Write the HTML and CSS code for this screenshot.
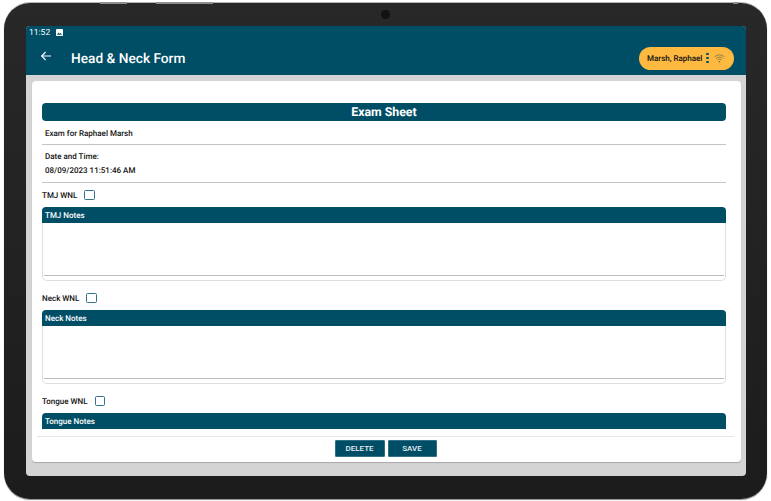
FILE: index.html
```html
<!DOCTYPE html>
<html lang="en">
<head>
<meta charset="utf-8">
<title>Head &amp; Neck Form</title>
<link rel="stylesheet" href="styles.css">
</head>
<body>
<div class="device">
  <span class="hw-btn hw-btn-a"></span>
  <span class="hw-btn hw-btn-b"></span>
  <span class="hw-btn hw-btn-c"></span>
  <span class="camera"></span>
  <div class="screen">
    <header class="appbar">
      <div class="status">
        <span>11:52</span>
        <svg class="status-icon" viewBox="0 0 8 8"><rect width="8" height="8" rx="0.8" fill="#fff"/><path d="M1 6.6 3 4l1.4 1.6L5.3 4.6 7 6.6z" fill="#004d66"/></svg>
      </div>
      <div class="toolbar">
        <svg class="back" viewBox="0 0 12 12"><path d="M11 6H1.8M5.6 2 1.6 6l4 4" fill="none" stroke="#fff" stroke-width="1.1"/></svg>
        <h1 class="title">Head &amp; Neck Form</h1>
        <div class="pill">
          <span class="pill-name">Marsh, Raphael</span>
          <span class="dots"><i></i><i></i><i></i></span>
          <svg class="wifi" viewBox="0 0 12 10"><path d="M.6 3.2a7.6 7.6 0 0 1 10.8 0M2.2 5a5.3 5.3 0 0 1 7.6 0M3.8 6.7a3 3 0 0 1 4.4 0" fill="none" stroke="#6b6a45" stroke-width=".8"/><circle cx="6" cy="8.6" r=".9" fill="#6b6a45"/></svg>
        </div>
      </div>
    </header>
    <main class="stage">
      <section class="card">
        <div class="scroll">
          <h2 class="sheet-title">Exam Sheet</h2>
          <p class="info info-exam">Exam for Raphael Marsh</p>
          <hr class="rule">
          <p class="info info-label">Date and Time:</p>
          <p class="info info-date">08/09/2023 11:51:46 AM</p>
          <hr class="rule">
          <label class="wnl"><span>TMJ WNL</span><span class="check"></span></label>
          <div class="notes">
            <div class="notes-head">TMJ Notes</div>
            <div class="notes-body"><div class="notes-line"></div></div>
          </div>
          <label class="wnl"><span>Neck WNL</span><span class="check"></span></label>
          <div class="notes">
            <div class="notes-head">Neck Notes</div>
            <div class="notes-body"><div class="notes-line"></div></div>
          </div>
          <label class="wnl"><span>Tongue WNL</span><span class="check"></span></label>
          <div class="notes">
            <div class="notes-head">Tongue Notes</div>
            <div class="notes-body"><div class="notes-line"></div></div>
          </div>
        </div>
        <footer class="actions">
          <button class="btn btn-delete">DELETE</button>
          <button class="btn btn-save">SAVE</button>
        </footer>
      </section>
    </main>
  </div>
</div>
</body>
</html>
```
FILE: styles.css
```css
* { box-sizing: border-box; }
html, body { margin: 0; height: 100%; background: #fff; overflow: hidden; }
body { font-family: Roboto, sans-serif; padding: 3px 4px 0; text-rendering: geometricPrecision; }
.device {
  position: relative;
  width: 763px;
  height: 496px;
  padding: 23px 21px 23px 22px;
  background: linear-gradient(#282828, #1c1c1c);
  border-radius: 26px;
  box-shadow: 0 1px 1px #8a8a8a, 0 -1px 0 #b5b5b5;
}
.hw-btn { position: absolute; top: -1px; height: 2px; background: #8f8f93; }
.hw-btn-a { left: 96px; width: 27px; }
.hw-btn-b { left: 152px; width: 57px; }
.hw-btn-c { left: 729px; width: 5px; }
.camera {
  position: absolute; left: 377px; top: 7px; width: 9px; height: 9px;
  border-radius: 50%; background: #101216;
}
.screen {
  width: 720px; height: 450px; display: flex; flex-direction: column;
  border-radius: 4px; overflow: hidden; background: #d4d4d4;
}
.appbar { height: 49px; background: #004d66; color: #fff; flex: none; }
.status {
  height: 14px; padding: 0 0 0 3px; display: flex; align-items: center; gap: 6px;
  font-size: 8.5px; line-height: 14px;
}
.status-icon { width: 7px; height: 7px; margin-top: -1px; }
.toolbar { height: 35px; display: flex; align-items: center; padding: 0 12px 0 14px; }
.back { width: 12px; height: 12px; margin-top: -3px; flex: none; }
.title { margin: 2px 0 0 19px; font-size: 13.7px; font-weight: 500; letter-spacing: 0; }
.pill {
  margin-left: auto; width: 95px; height: 23px; border-radius: 12px; margin-top: 1px;
  background: #fdb940; color: #111; display: flex; align-items: center; padding-left: 8px;
}
.pill-name { font-size: 8px; font-weight: 500; }
.dots { display: flex; flex-direction: column; gap: 1.5px; margin-left: 4px; }
.dots i { width: 2.4px; height: 2.4px; border-radius: 50%; background: #004d66; display: block; }
.wifi { width: 11px; height: 9px; margin-left: 5px; }
.stage { flex: 1; padding: 6px 5px 14px 6px; min-height: 0; display: flex; }
.card {
  flex: 1; background: #fff; border-radius: 4px; display: flex; flex-direction: column;
  box-shadow: 0 1px 1px #a8a8a8; min-width: 0;
}
.scroll { flex: 1; min-height: 0; overflow: hidden; padding: 22px 15px 0 10px; }
.sheet-title {
  margin: 0; height: 18px; line-height: 21px; text-align: center; color: #fff;
  background: #004d66; border-radius: 4px; font-size: 12.3px; font-weight: 700;
}
.info { margin: 0 0 0 3px; font-size: 8px; font-weight: 500; color: #111; line-height: 12px; }
.info-exam { padding-top: 7px; height: 23px; }
.rule { margin: 0; border: 0; border-top: 1px solid #c4c4c4; }
.info-label { padding-top: 6px; height: 18px; }
.info-date { padding-top: 2px; height: 19px; }
.wnl {
  display: flex; align-items: center; gap: 7px; height: 24px; font-size: 8px;
  font-weight: 500; color: #111; padding-top: 1px;
}
.check { width: 10.5px; height: 10.5px; border: 1.5px solid #33708a; border-radius: 1.5px; background: #fff; margin-top: -1px; }
.notes { height: 74px; margin-bottom: 5px; border: 1px solid #dedede; border-top: 0; border-radius: 5px; }
.notes-head {
  margin: 0 -1px; height: 16px; line-height: 18px; padding-left: 3px; background: #004d66;
  color: #fff; font-size: 8px; font-weight: 500; border-radius: 4px 4px 0 0;
}
.notes-body { height: 57px; padding: 52px 1px 0; }
.notes-line { height: 1px; background: #bdbdbd; }
.actions {
  flex: none; height: 26px; margin: 6px 7px 0 5px; border-top: 1px solid #e6e6e6;
  display: flex; justify-content: center; align-items: flex-start; gap: 3px; padding-top: 3px;
}
.btn {
  height: 17px; padding: 0; border: 1px solid #2f6f87; border-radius: 1px; background: #004d66; color: #e8eef1;
  font-family: inherit; font-size: 8px; font-weight: 500; letter-spacing: 0;
}
.btn-delete { width: 50px; }
.btn-save { width: 49px; }
```
